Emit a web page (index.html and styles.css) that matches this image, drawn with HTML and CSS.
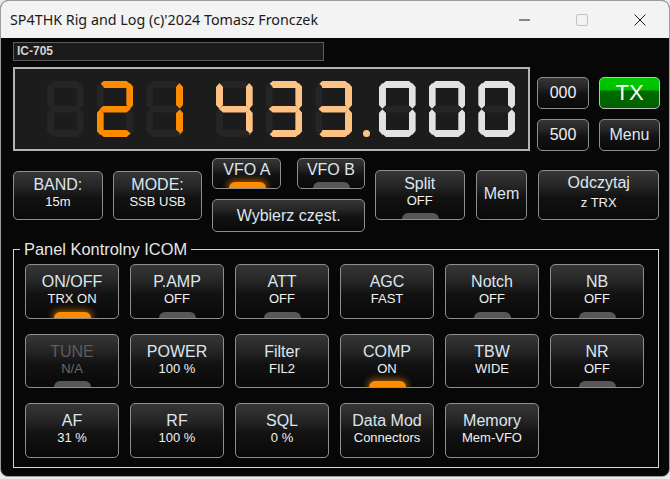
FILE: index.html
```html
<!DOCTYPE html>
<html lang="pl">

<head>
    <meta charset="UTF-8">
    <meta name="viewport" content="width=device-width, initial-scale=1.0">
    <title>SP4THK Rig and Log</title>
    <link rel="stylesheet" href="styles.css">
</head>

<body>
    <div class="window">
        <div class="titlebar">
            <span class="title">SP4THK Rig and Log (c)'2024 Tomasz Fronczek</span>
            <div class="win-controls">
                <span class="win-btn"><svg width="11" height="11"><path d="M0 6h11" stroke="#1b1b1b" stroke-width="1"/></svg></span>
                <span class="win-btn"><svg width="12" height="12"><rect x="0.5" y="0.5" width="11" height="11" rx="1.5" fill="none" stroke="#c2c2c2"/></svg></span>
                <span class="win-btn"><svg width="12" height="12"><path d="M0.5 0.5l11 11M11.5 0.5l-11 11" stroke="#1b1b1b" stroke-width="1"/></svg></span>
            </div>
        </div>

        <div class="app">
            <div class="rig-name">IC-705</div>

            <!-- wyświetlacz częstotliwości + szybkie przyciski -->
            <div class="top-row">
                <div class="freq" aria-label="21 433.000">
                    <div class="digit" data-d=" "></div>
                    <div class="digit orange" data-d="2"></div>
                    <div class="digit orange group-end" data-d="1"></div>
                    <div class="digit peach" data-d="4"></div>
                    <div class="digit peach" data-d="3"></div>
                    <div class="digit peach before-dot" data-d="3"></div>
                    <div class="dot"></div>
                    <div class="digit white" data-d="0"></div>
                    <div class="digit white" data-d="0"></div>
                    <div class="digit white" data-d="0"></div>
                </div>
                <div class="quick">
                    <button class="btn">000</button>
                    <button class="btn tx">TX</button>
                    <button class="btn">500</button>
                    <button class="btn menu">Menu</button>
                </div>
            </div>

            <div class="ctl-row">
                <button class="btn wide"><span class="main">BAND:</span><span class="sub">15m</span></button>
                <button class="btn wide"><span class="main">MODE:</span><span class="sub">SSB USB</span></button>
                <div class="vfo">
                    <div class="vfo-pair">
                        <button class="btn vfo-a"><span class="main">VFO A</span><span class="led on"></span></button>
                        <button class="btn vfo-b"><span class="main">VFO B</span><span class="led"></span></button>
                    </div>
                    <button class="btn pick"><span class="main">Wybierz częst.</span></button>
                </div>
                <button class="btn wide split"><span class="main">Split</span><span class="sub">OFF</span><span class="led"></span></button>
                <button class="btn mem"><span class="main">Mem</span></button>
                <button class="btn read"><span class="main">Odczytaj</span><span class="sub">z TRX</span></button>
            </div>

            <fieldset class="panel">
                <legend>Panel Kontrolny ICOM</legend>
                <div class="panel-grid">
                    <button class="btn cell"><span class="main">ON/OFF</span><span class="sub">TRX ON</span><span class="led on"></span></button>
                    <button class="btn cell"><span class="main">P.AMP</span><span class="sub">OFF</span><span class="led"></span></button>
                    <button class="btn cell"><span class="main">ATT</span><span class="sub">OFF</span><span class="led"></span></button>
                    <button class="btn cell"><span class="main">AGC</span><span class="sub">FAST</span></button>
                    <button class="btn cell"><span class="main">Notch</span><span class="sub">OFF</span><span class="led"></span></button>
                    <button class="btn cell"><span class="main">NB</span><span class="sub">OFF</span><span class="led"></span></button>

                    <button class="btn cell disabled"><span class="main">TUNE</span><span class="sub">N/A</span><span class="led"></span></button>
                    <button class="btn cell"><span class="main">POWER</span><span class="sub">100 %</span></button>
                    <button class="btn cell"><span class="main">Filter</span><span class="sub">FIL2</span></button>
                    <button class="btn cell"><span class="main">COMP</span><span class="sub">ON</span><span class="led on"></span></button>
                    <button class="btn cell"><span class="main">TBW</span><span class="sub">WIDE</span></button>
                    <button class="btn cell"><span class="main">NR</span><span class="sub">OFF</span><span class="led"></span></button>

                    <button class="btn cell"><span class="main">AF</span><span class="sub">31 %</span></button>
                    <button class="btn cell"><span class="main">RF</span><span class="sub">100 %</span></button>
                    <button class="btn cell"><span class="main">SQL</span><span class="sub">0 %</span></button>
                    <button class="btn cell"><span class="main">Data Mod</span><span class="sub">Connectors</span></button>
                    <button class="btn cell"><span class="main">Memory</span><span class="sub">Mem-VFO</span></button>
                </div>
            </fieldset>
        </div>
    </div>

    <script src="script.js"></script>
</body>

</html>
```

FILE: styles.css
```css
* {
    box-sizing: border-box;
}

body {
    margin: 0;
    background-color: #e9e9e9;
    font-family: "Liberation Sans", Arial, sans-serif;
}

.window {
    width: 670px;
    height: 477px;
    border: 1px solid #9c9c9c;
    border-radius: 8px;
    overflow: hidden;
    display: flex;
    flex-direction: column;
    background-color: #070707;
}

/* pasek tytułu */
.titlebar {
    height: 37px;
    flex-shrink: 0;
    background-color: #f3f3f3;
    display: flex;
    align-items: center;
}

.title {
    font-family: "Noto Sans", "Open Sans", sans-serif;
    font-size: 14.3px;
    color: #1a1a1a;
    padding-left: 9px;
}

.win-controls {
    margin-left: auto;
    display: flex;
}

.win-btn {
    width: 58px;
    height: 37px;
    display: flex;
    align-items: center;
    justify-content: center;
}

.app {
    padding: 4px 10px 0 12px;
}

.rig-name {
    width: 311px;
    height: 19px;
    border: 1px solid #5c5c5c;
    background-color: #1b1b1b;
    color: #d4d4d4;
    font-weight: bold;
    font-size: 12px;
    line-height: 17px;
    padding-left: 3px;
}

/* częstotliwość */
.top-row {
    display: flex;
    align-items: flex-end;
    gap: 7px;
    margin-top: 6px;
}

.freq {
    width: 517px;
    height: 84px;
    border: 2px solid #b4b4b4;
    background-color: #1c1c1c;
    display: flex;
    align-items: center;
    padding-left: 32px;
}

.digit {
    position: relative;
    width: 37px;
    height: 56px;
    margin-right: 13px;
}

.digit.group-end {
    margin-right: 33px;
}

.digit.before-dot {
    margin-right: 11px;
}

.dot {
    width: 7px;
    height: 7px;
    border-radius: 50%;
    background-color: #ffc285;
    margin-top: 49px;
    margin-right: 9px;
}

.seg {
    position: absolute;
    background-color: #252525;
}

.seg.a, .seg.d, .seg.g {
    left: 3px;
    width: 31px;
    height: 7px;
    clip-path: polygon(0 50%, 4px 0, calc(100% - 4px) 0, 100% 50%, calc(100% - 4px) 100%, 4px 100%);
}

.seg.a { top: 0; }
.seg.g { top: 24.5px; }
.seg.d { top: 49px; }

.seg.b, .seg.c, .seg.e, .seg.f {
    width: 7px;
    height: 26px;
    clip-path: polygon(50% 0, 100% 4px, 100% calc(100% - 4px), 50% 100%, 0 calc(100% - 4px), 0 4px);
}

.seg.f { left: 0; top: 2px; }
.seg.b { right: 0; top: 2px; }
.seg.e { left: 0; top: 28px; }
.seg.c { right: 0; top: 28px; }

.digit.orange .seg.lit { background-color: #ff8c00; }
.digit.peach .seg.lit { background-color: #ffc285; }
.digit.white .seg.lit { background-color: #e2e2e2; }

.quick {
    display: grid;
    grid-template-columns: 52px 61px;
    grid-auto-rows: 32px;
    column-gap: 10px;
    row-gap: 10px;
}

/* przyciski */
.btn {
    position: relative;
    overflow: hidden;
    display: flex;
    flex-direction: column;
    align-items: center;
    justify-content: center;
    padding: 0;
    border: 1px solid #8e8e8e;
    border-radius: 5px;
    background: linear-gradient(to bottom, #363636 0%, #262626 30%, #121212 55%, #090909 100%);
    color: #f0f0f0;
    font-family: "Liberation Sans", Arial, sans-serif;
    font-size: 16px;
    cursor: pointer;
}

.btn.menu {
    color: #dfe7ef;
}

.btn.tx {
    background: linear-gradient(to bottom, #00c800 0%, #00c000 38%, #006a00 45%, #006000 100%);
    border-color: #bdbdbd;
    color: #ffffff;
    font-size: 22px;
}

.main {
    font-size: 16px;
    line-height: 18px;
    color: #dde6ef;
}

.sub {
    font-size: 13px;
    line-height: 15px;
    color: #f2f2f2;
}

.led {
    position: absolute;
    bottom: 0;
    left: 50%;
    width: 37px;
    height: 6px;
    margin-left: -18px;
    border-radius: 6px 6px 0 0;
    background-color: #575757;
}

.led.on {
    background-color: #ff8c00;
    box-shadow: 0 0 6px 2px rgba(255, 140, 0, 0.55);
}

.ctl-row {
    display: flex;
    align-items: center;
    gap: 10px;
    margin-top: 7px;
}

.btn.wide {
    width: 90px;
    height: 49px;
    padding-bottom: 6px;
}

.btn.split {
    height: 50px;
    padding-bottom: 8px;
}

.vfo {
    width: 153px;
    display: flex;
    flex-direction: column;
    gap: 10px;
}

.vfo-pair {
    display: flex;
    justify-content: space-between;
}

.btn.vfo-a,
.btn.vfo-b {
    height: 31px;
    padding-bottom: 7px;
}

.btn.vfo-a { width: 69px; }
.btn.vfo-b { width: 68px; }

.btn.pick {
    height: 33px;
}

.btn.mem {
    width: 52px;
    height: 50px;
    margin-left: 1px;
    padding-bottom: 3px;
}

.btn.read {
    width: 121px;
    height: 50px;
    margin-left: 1px;
    padding-bottom: 6px;
}

.btn.read .sub {
    margin-top: 3px;
}

/* panel ICOM */
.panel {
    width: 646px;
    margin: 8px 0 0 0;
    padding: 0 0 9px 0;
    border: 1px solid #d6d6d6;
}

.panel legend {
    margin-left: 6px;
    padding: 0 4px;
    font-size: 16.4px;
    line-height: 18px;
    color: #e6e6e6;
}

.panel-grid {
    display: grid;
    grid-template-columns: repeat(6, 94px);
    grid-auto-rows: 54.5px;
    column-gap: 11px;
    row-gap: 15px;
    margin: 6px 0 0 11px;
}

.btn.cell {
    padding-bottom: 3px;
}

.btn.disabled .main {
    color: #5c5c5c;
}

.btn.disabled .sub {
    color: #6a6a6a;
}
```

FILE: script.js
```js
// segmenty cyfr wyświetlacza
const SEGMENTS = {
    '0': 'abcdef',
    '1': 'bc',
    '2': 'abged',
    '3': 'abgcd',
    '4': 'fgbc',
    '5': 'afgcd',
    '6': 'afgedc',
    '7': 'abc',
    '8': 'abcdefg',
    '9': 'abcdfg',
    ' ': ''
};

document.querySelectorAll('.digit').forEach((el) => {
    const lit = SEGMENTS[el.dataset.d] || '';
    'abcdefg'.split('').forEach((s) => {
        const seg = document.createElement('span');
        seg.className = 'seg ' + s + (lit.includes(s) ? ' lit' : '');
        el.appendChild(seg);
    });
});
```
